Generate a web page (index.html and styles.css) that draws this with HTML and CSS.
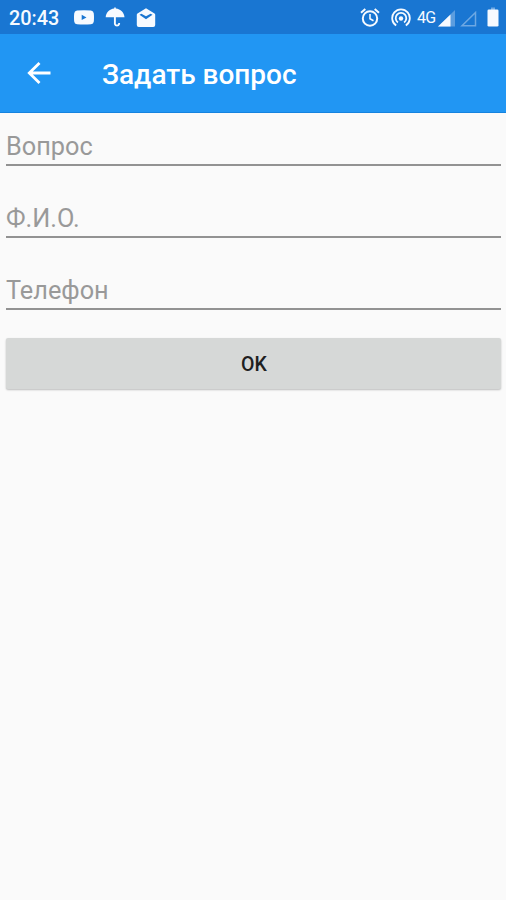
FILE: index.html
```html
<!DOCTYPE html>
<html lang="ru">
<head>
<meta charset="utf-8">
<title>Задать вопрос</title>
<link rel="stylesheet" href="styles.css">
</head>
<body>
<div class="status">
  <span class="clock">20:43</span>
  <div class="notifications">
    <svg width="20" height="20" viewBox="0 0 20 20"><path fill="currentColor" fill-rule="evenodd" d="M3 3.500Q10 2.900 17 3.500Q19.600 3.800 19.800 6.500Q20.200 10.500 19.800 14.500Q19.600 17 17 17.200Q10 17.800 3 17.200Q.4 17 .2 14.500Q-.2 10.500.2 6.500Q.4 3.800 3 3.500ZM7.700 7.700v5.300l4.800-2.600Z"/></svg>
    <svg width="20" height="20" viewBox="0 0 20 20"><path fill="currentColor" d="M9.200 1.500V.4h1.600v1.100C15.600 2 19.200 5.600 19.500 10.300H.7C1 5.600 4.500 2 9.200 1.500Z"/><path fill="none" stroke="currentColor" stroke-width="1.900" d="M9.900 8v9a2.200 2.200 0 0 0 4.200 0v-1"/></svg>
    <svg width="20" height="20" viewBox="0 0 20 20"><path fill="currentColor" fill-rule="evenodd" d="M10 1.300 18.500 6.500Q19.200 7 19.200 7.800V18Q19.200 20 17.200 20H2.800Q.8 20 .8 18V7.800Q.8 7 1.500 6.500ZM3.500 7.800 10 12.300 16.500 7.800 14.600 6.700 10 9.300 5.400 6.700Z"/></svg>
  </div>
  <div class="system">
    <svg width="20" height="20" viewBox="0 0 20 20" fill="none" stroke="currentColor"><circle cx="10" cy="11.500" r="7.200" stroke-width="2"/><path stroke-width="2" d="M1 5.700 5.300 2.100M14.700 2.100 19 5.700"/><path stroke-width="1.600" d="M10 7v4.800l3.500 2"/></svg>
    <svg class="hotspot" width="20" height="20" viewBox="0 0 20 20" fill="none" stroke="currentColor" stroke-width="1.800"><path d="M5.200 18.500a8.800 8.800 0 1 1 9.600 0"/><path d="M6.900 15.500a5.300 5.300 0 1 1 6.200 0"/><circle cx="10" cy="11.500" r="2.200" fill="currentColor" stroke="none"/></svg>
    <span class="network">4G</span>
    <svg class="signal" width="17" height="17" viewBox="0 0 17 17"><path fill="currentColor" opacity=".3" d="M17 0v16.500H0Z"/><path fill="currentColor" d="M12.500 4.400v12.100H0Z"/></svg>
    <svg class="empty-signal" width="17" height="17" viewBox="0 0 17 17"><path fill="none" stroke="currentColor" stroke-width="1.500" opacity=".38" d="M15.500 2.500v13.200H2Z"/></svg>
    <svg class="battery" width="12" height="20" viewBox="0 0 12 20"><path fill="currentColor" opacity=".4" d="M4 .5h4V3H4Z"/><rect fill="currentColor" x=".5" y="2.500" width="11" height="17" rx="1.300"/></svg>
  </div>
</div>
<header class="toolbar">
  <svg class="back" width="26" height="26" viewBox="0 0 26 26"><path fill="none" stroke="currentColor" stroke-width="2.800" d="M24.500 13H3M13.500 3 3.300 13l10.200 10"/></svg>
  <h1 class="title">Задать вопрос</h1>
</header>
<main class="form">
  <input class="field question" aria-label="Вопрос" placeholder="Вопрос">
  <input class="field name" aria-label="Ф.И.О." placeholder="Ф.И.О.">
  <input class="field phone" aria-label="Телефон" placeholder="Телефон">
  <button class="submit">OK</button>
</main>
</body>
</html>
```

FILE: styles.css
```css
* { box-sizing: border-box; }
body {
  margin: 0;
  min-height: 900px;
  background: #fafafa;
  font-family: Roboto, "Liberation Sans", sans-serif;
}
svg { display: block; flex: none; }
.status {
  display: flex;
  align-items: center;
  height: 34px;
  padding: 0 7px 0 9px;
  background: #1976d2;
  color: #f6faff;
}
.clock {
  width: 65px;
  font-size: 19.800px;
  font-weight: 500;
  line-height: 34px;
  padding-top: 3px;
}
.notifications { display: flex; gap: 11px; }
.system { display: flex; align-items: center; margin-left: auto; }
.hotspot { margin-left: 11px; }
.network {
  width: 21px;
  margin-left: 6px;
  font-size: 16px;
  line-height: 34px;
  letter-spacing: -0.800px;
  padding-top: 2px;
}
.signal { margin-top: 3px; }
.empty-signal { margin: 3px 0 0 5px; }
.battery { margin-left: 10px; }
.toolbar {
  display: flex;
  align-items: center;
  height: 79px;
  padding-left: 26px;
  border-bottom: 1px solid #1583df;
  background: #2196f3;
  color: #fff;
}
.title {
  margin: 3px 0 0 50px;
  font-size: 28px;
  font-weight: 500;
  line-height: 32px;
}
.form {
  display: flex;
  flex-direction: column;
  padding: 14px 5px 0 6px;
}
.field {
  width: 100%;
  height: 39px;
  margin-bottom: 33px;
  padding: 1px 0 0;
  border: 0;
  border-bottom: 2px solid #929292;
  border-radius: 0;
  outline: 0;
  background: transparent;
  font: 400 25.300px/32px Roboto, "Liberation Sans", sans-serif;
}
.field::placeholder { color: #999; opacity: 1; }
.phone { margin-bottom: 28px; }
.submit {
  height: 51px;
  padding: 2px 0 0 1px;
  border: 0;
  border-radius: 2px;
  background: #d6d8d7;
  box-shadow: 0 1px 2px rgba(0, 0, 0, .25);
  color: #202020;
  font: 500 19.500px/24px Roboto, "Liberation Sans", sans-serif;
}
```
